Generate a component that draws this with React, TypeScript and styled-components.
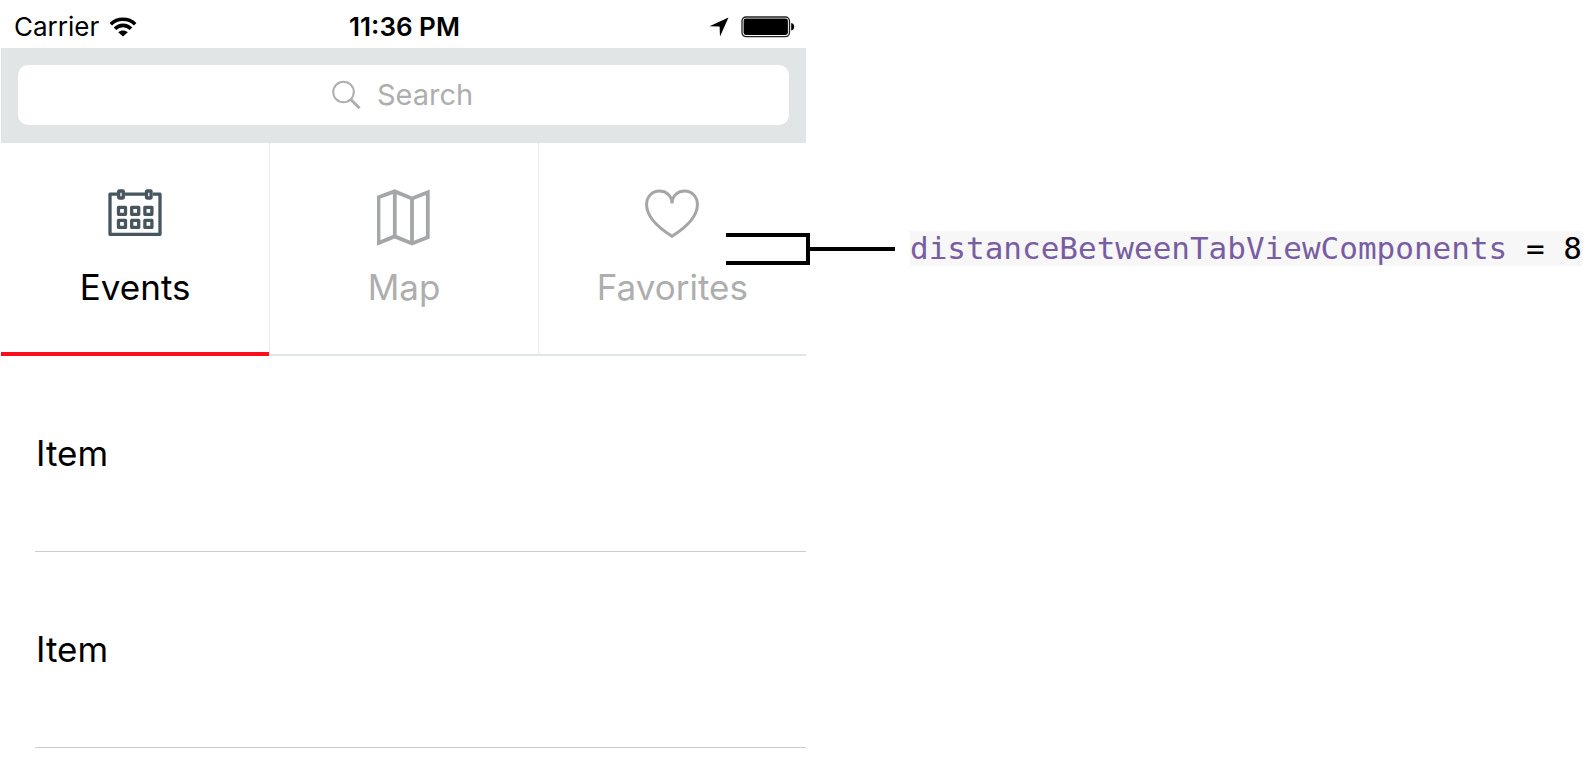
import React from 'react';
import styled, { createGlobalStyle } from 'styled-components';

const GlobalStyle = createGlobalStyle`
  *, *::before, *::after { box-sizing: border-box; }
  body {
    margin: 0;
    background: #fff;
    color: #000;
    font-family: Inter, "Liberation Sans", sans-serif;
    overflow-x: hidden;
  }
`;

const Page = styled.main`
  display: grid;
  grid-template-columns: 805fr 784fr;
  min-height: 100vh;
  padding-left: 1px;
`;

const Phone = styled.section`
  display: flex;
  flex-direction: column;
  min-width: 0;
`;

const StatusBar = styled.header`
  display: grid;
  grid-template-columns: 1fr auto 1fr;
  align-items: center;
  height: 48px;
  padding: 6px 11px 0 13px;
  font-size: 26px;
  line-height: 30px;
`;

const StatusGroup = styled.div<{ $end?: boolean }>`
  display: flex;
  align-items: center;
  justify-content: ${(p) => (p.$end ? 'flex-end' : 'flex-start')};
  gap: ${(p) => (p.$end ? '12px' : '10px')};

  svg { display: block; }
`;

const Clock = styled.time`
  font-weight: 600;
`;

const SearchBar = styled.div`
  padding: 17px 17px 18px;
  background: #e1e5e5;
`;

const SearchField = styled.label`
  display: flex;
  align-items: center;
  justify-content: center;
  gap: 16px;
  height: 60px;
  padding-right: 2px;
  border-radius: 10px;
  background: #fff;
`;

const SearchInput = styled.input`
  field-sizing: content;
  padding: 0;
  border: 0;
  outline: 0;
  background: transparent;
  color: #000;
  font: inherit;
  font-size: 29px;
  line-height: 36px;

  &::placeholder { color: #aeaeae; opacity: 1; }
`;

const TabArea = styled.div`
  position: relative;
`;

const Tabs = styled.div`
  display: grid;
  grid-template-columns: repeat(3, 1fr);
`;

const Tab = styled.button<{ $active?: boolean }>`
  display: flex;
  flex-direction: column;
  align-items: center;
  gap: 20px;
  height: 213px;
  padding: 46px 0 0;
  border: 0;
  background: #fff;
  box-shadow: inset 0 ${(p) => (p.$active ? '-4px #fc0d1b' : '-2px #e1e5e5')};
  color: ${(p) => (p.$active ? '#000' : '#aeaeae')};
  font: inherit;
  font-size: 35px;
  line-height: 44px;
  cursor: pointer;

  & + & { border-left: 1px solid #e8eaea; }
`;

const TabIcon = styled.span`
  display: block;
  height: 56px;

  svg { display: block; }
`;

const Callout = styled.div`
  position: absolute;
  top: 88px;
  left: calc(100% - 80px);
  display: flex;
  align-items: center;
  gap: 15px;
`;

const Code = styled.code`
  background: #f7f7f7;
  font-family: "DejaVu Sans Mono", monospace;
  font-size: 31px;
  line-height: 35px;
  white-space: pre;
`;

const Property = styled.span`
  color: #795da3;
`;

const ItemList = styled.ul`
  margin: 0;
  padding: 0 0 0 34px;
  list-style: none;
`;

const Item = styled.li`
  display: flex;
  align-items: center;
  height: 196px;
  padding: 0 0 2px 1px;
  border-bottom: 1px solid #ccc;
  font-size: 35px;
  line-height: 42px;
`;

const WifiIcon = () => (
  <svg width="28" height="20" viewBox="0 0 28 20" fill="none" stroke="#000" aria-hidden="true">
    <path d="M1.8 7.2C8.500 0.6 19.500 0.6 26.200 7.2" strokeWidth="3.6" />
    <path d="M6 11.8C10.6 7.2 17.4 7.2 22 11.8" strokeWidth="3.6" />
    <path d="M9.200 15.2C12 12.8 16 12.8 18.800 15.2L14 19.6Z" fill="#000" stroke="none" />
  </svg>
);

const LocationIcon = () => (
  <svg width="20" height="20" viewBox="0 0 20 20" aria-hidden="true">
    <path d="M19.5 0.5L11 19.5L10.6 9.6L0.5 9.2Z" fill="#000" />
  </svg>
);

const BatteryIcon = () => (
  <svg width="54" height="22" viewBox="0 0 54 22" aria-hidden="true">
    <rect x="1" y="1" width="47.5" height="19.6" rx="4" fill="none" stroke="#222" strokeWidth="1.3" />
    <rect x="2.6" y="2.6" width="44.3" height="16.4" rx="2.4" fill="#000" />
    <path d="M50.2 7C54.2 7.6 54.2 14 50.2 14.6Z" fill="#000" />
  </svg>
);

const SearchIcon = () => (
  <svg width="29" height="30" viewBox="0 0 29 30" fill="none" stroke="#aeaeae" aria-hidden="true">
    <circle cx="11.5" cy="12" r="10.3" strokeWidth="2" />
    <path d="M18.5 19.3L27.6 28.2" strokeWidth="3" />
  </svg>
);

const CalendarIcon = () => (
  <svg width="54" height="48" viewBox="0 0 54 48" fill="none" stroke="#47555e" strokeWidth="3.3" aria-hidden="true">
    <path d="M9 5.200H2V45.300H52V5.200H45M17 5.200H37" strokeLinejoin="round" />
    {[10.7, 38.5].map((x) => (
      <rect key={x} x={x} y="2" width="4.6" height="7" rx="0.5" />
    ))}
    {[18.3, 31.4].map((y) =>
      [10.5, 23.7, 36.9].map((x) => (
        <rect key={`${x}-${y}`} x={x} y={y} width="7" height="7" strokeLinejoin="round" />
      )),
    )}
  </svg>
);

const MapIcon = () => (
  <svg width="54" height="58" viewBox="1 0 54 58" fill="none" stroke="#a4a6a7" strokeWidth="3.8" aria-hidden="true">
    <path d="M2.5 8.200L18.600 2.400L36 9.400L51.800 3.200V48.200L36 54.400L18.600 47.400L2.500 54Z" />
    <path d="M18.800 3V48M36 9V54" />
  </svg>
);

const HeartIcon = () => (
  <svg width="54" height="50" viewBox="0 0 54 50" fill="none" stroke="#a4a6a7" strokeWidth="3" aria-hidden="true">
    <path d="M27 14.500C27 6 20.500 2 14.600 2C7.400 2 1.600 7.500 1.600 15.500C1.600 28 13 38.500 27 47.200C41 38.500 52.400 28 52.400 15.500C52.400 7.500 46.600 2 39.400 2C33.500 2 27 6 27 14.500Z" />
  </svg>
);

const Bracket = () => (
  <svg width="169" height="32" viewBox="0 0 169 32" fill="none" stroke="#000" strokeWidth="4" aria-hidden="true">
    <path d="M0 2H82V30H0M82 16H169" />
  </svg>
);

const tabs = [
  { label: 'Events', icon: <CalendarIcon /> },
  { label: 'Map', icon: <MapIcon /> },
  { label: 'Favorites', icon: <HeartIcon /> },
];

export default function App() {
  return (
    <>
      <GlobalStyle />
      <Page>
        <Phone>
          <StatusBar>
            <StatusGroup>
              <span>Carrier</span>
              <WifiIcon />
            </StatusGroup>
            <Clock dateTime="23:36">11:36 PM</Clock>
            <StatusGroup $end>
              <LocationIcon />
              <BatteryIcon />
            </StatusGroup>
          </StatusBar>
          <SearchBar>
            <SearchField>
              <SearchIcon />
              <SearchInput type="text" placeholder="Search" aria-label="Search" />
            </SearchField>
          </SearchBar>
          <TabArea>
            <Tabs role="tablist">
              {tabs.map((tab, i) => (
                <Tab key={tab.label} type="button" role="tab" aria-selected={i === 0} $active={i === 0}>
                  <TabIcon>{tab.icon}</TabIcon>
                  <span>{tab.label}</span>
                </Tab>
              ))}
            </Tabs>
            <Callout>
              <Bracket />
              <Code>
                <Property>distanceBetweenTabViewComponents</Property> = 8
              </Code>
            </Callout>
          </TabArea>
          <ItemList>
            <Item>Item</Item>
            <Item>Item</Item>
          </ItemList>
        </Phone>
      </Page>
    </>
  );
}
